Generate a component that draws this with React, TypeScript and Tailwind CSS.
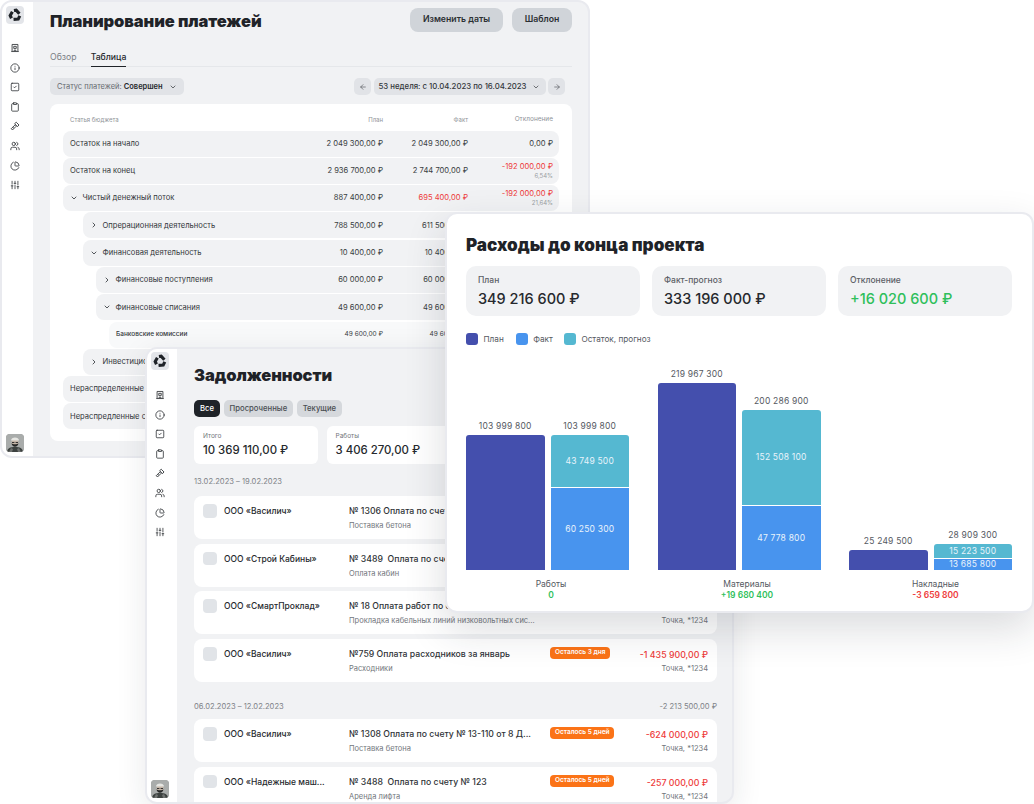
import React from "react";
import { ArrowLeft, ArrowRight, ChevronDown, ChevronRight, Clipboard, Info, PieChart, SquareCheck, SlidersVertical, Users } from "lucide-react";

function Logo() {
  return (
    <div className="flex h-[18px] w-[18px] items-center justify-center rounded-[4px] bg-[#e3e5e9]">
      <svg viewBox="0 0 24 24" className="h-[14px] w-[14px]" fill="none" stroke="#1f2328" strokeWidth="5.4">
        <path d="M10.2 4.2 L14 3.6 L19.5 10" />
        <path d="M20.2 13.5 L17.5 19 L9.5 19.6" />
        <path d="M6 17.5 L3.8 13 L7.5 6.5" />
      </svg>
    </div>
  );
}

function Avatar() {
  return (
    <div className="h-[18px] w-[18px] overflow-hidden rounded-[4px] bg-[#9a9d9c]">
      <svg viewBox="0 0 18 18" className="h-full w-full">
        <rect width="18" height="18" fill="#a9acab" />
        <path d="M1 18c.5-4 3-5 8-5s7.500 1 8 5z" fill="#3d4240" />
        <path d="M3 18l2-4 2 1-1 3zM15 18l-2-4-2 1 1 3z" fill="#6f7270" />
        <circle cx="9" cy="8.500" r="3.400" fill="#c4b4a6" />
        <path d="M5.600 9.300c.2 4.600 6.600 4.600 6.800 0-1 1.300-5.800 1.300-6.800 0z" fill="#262727" />
        <path d="M5 6.600C5 2.600 13 2.600 13 6.600z" fill="#e6e6e2" />
        <rect x="6" y="8" width="2.400" height="1" fill="#333" />
        <rect x="9.600" y="8" width="2.400" height="1" fill="#333" />
      </svg>
    </div>
  );
}

function BuildingIcon() {
  return (
    <svg viewBox="0 0 24 24" className="h-[10px] w-[10px]" fill="none" stroke="#2b2f33" strokeWidth="2">
      <path d="M5 20V3.500h14V20" />
      <path d="M3 20.500h18" />
      <path d="M9 8h6v5H9z" />
      <path d="M10 20v-3h4v3" />
    </svg>
  );
}

function ToolIcon() {
  return (
    <svg viewBox="0 0 24 24" className="h-[10px] w-[10px]" fill="none" stroke="#2b2f33" strokeWidth="2.100" strokeLinejoin="round">
      <path d="M3 18.500 11.500 10l3 3L6 21.500z" />
      <path d="M11 6.500 15 3l6.500 6.500L18 13.500z" />
      <path d="M7 15l2 2" />
    </svg>
  );
}

function Side({ width, top, gap }: { width: string; top: string; gap: string }) {
  const cls = "text-[#2b2f33]";
  return (
    <aside className={`flex shrink-0 flex-col items-start bg-white pb-[4px] pl-[4px] ${width} ${top}`}>
      <Logo />
      <div className={`flex w-[18px] flex-col items-center gap-[9.600px] ${gap}`}>
        <BuildingIcon />
        <Info size={10} strokeWidth={1.9} className={cls} />
        <SquareCheck size={10} strokeWidth={1.9} className={cls} />
        <Clipboard size={10} strokeWidth={1.9} className={cls} />
        <ToolIcon />
        <Users size={10} strokeWidth={1.9} className={cls} />
        <PieChart size={10} strokeWidth={1.9} className={cls} />
        <SlidersVertical size={10} strokeWidth={1.9} className={cls} />
      </div>
      <div className="mt-auto">
        <Avatar />
      </div>
    </aside>
  );
}

type R = { n: string; p: string; f: string; d: string; red?: boolean; pct?: string; indent: string; chev?: "d" | "r"; light?: boolean };
const rows: R[] = [
  { n: "Остаток на начало", p: "2 049 300,00 ₽", f: "2 049 300,00 ₽", d: "0,00 ₽", indent: "ml-0" },
  { n: "Остаток на конец", p: "2 936 700,00 ₽", f: "2 744 700,00 ₽", d: "-192 000,00 ₽", pct: "6,54%", indent: "ml-0" },
  { n: "Чистый денежный поток", p: "887 400,00 ₽", f: "695 400,00 ₽", red: true, d: "-192 000,00 ₽", pct: "21,64%", indent: "ml-0", chev: "d" },
  { n: "Опрерационная деятельность", p: "788 500,00 ₽", f: "611 500,00 ₽", d: "", indent: "ml-[20px]", chev: "r" },
  { n: "Финансовая деятельность", p: "10 400,00 ₽", f: "10 400,00 ₽", d: "", indent: "ml-[20px]", chev: "d" },
  { n: "Финансовые поступления", p: "60 000,00 ₽", f: "60 000,00 ₽", d: "", indent: "ml-[33px]", chev: "r" },
  { n: "Финансовые списания", p: "49 600,00 ₽", f: "49 600,00 ₽", d: "", indent: "ml-[33px]", chev: "d" },
  { n: "Банковские комиссии", p: "49 600,00 ₽", f: "49 600,00 ₽", d: "", indent: "ml-[46px]", light: true },
  { n: "Инвестиционная деятельность", p: "38 500,00 ₽", f: "38 500,00 ₽", d: "", indent: "ml-[20px]", chev: "r" },
  { n: "Нераспределенные доходы", p: "0,00 ₽", f: "0,00 ₽", d: "", indent: "ml-0" },
  { n: "Нераспредленные списания", p: "0,00 ₽", f: "0,00 ₽", d: "", indent: "ml-0" },
];

function Row({ r }: { r: R }) {
  const size = r.light ? "text-[6.500px]" : "text-[7.600px]";
  return (
    <div className={`flex h-[26px] items-center rounded-[8px] pl-[7px] pr-[6px] ${r.indent} ${r.light ? "bg-[#f8f9fa]" : "bg-[#f1f2f4]"}`}>
      {r.chev === "d" && <ChevronDown size={8} strokeWidth={2.400} className="mr-[4.500px] shrink-0 text-[#2b2f33]" />}
      {r.chev === "r" && <ChevronRight size={8} strokeWidth={2.400} className="mr-[4.500px] shrink-0 text-[#2b2f33]" />}
      <span className={`flex-1 whitespace-nowrap text-[#33373b] ${r.light ? "font-medium" : ""} ${size}`}>{r.n}</span>
      <span className={`w-[85px] text-right ${size} text-[#3a3e42]`}>{r.p}</span>
      <span className={`w-[85px] text-right ${size} ${r.red ? "text-[#ee3b3b]" : "text-[#3a3e42]"}`}>{r.f}</span>
      <span className="flex w-[85px] flex-col items-end leading-[9px]">
        <span className={`text-[7.600px] ${r.pct ? "text-[#ee3b3b]" : "text-[#3a3e42]"}`}>{r.d}</span>
        {r.pct && <span className="text-[6px] text-[#9a9ea3]">{r.pct}</span>}
      </span>
    </div>
  );
}

function Planning() {
  return (
    <section className="absolute left-0 top-0 flex h-[458px] w-[590px] overflow-hidden rounded-[12px] border-2 border-[#e9eaef] bg-[#f1f2f4]">
      <Side width="w-[31px]" top="pt-[4px]" gap="mt-[19px]" />
      <div className="flex min-w-0 flex-1 flex-col pl-[17px] pr-[16px]">
        <div className="flex h-[30px] items-center justify-between pt-[6px]">
          <h1 className="pt-[3px] text-[16.500px] font-black tracking-[-0.1px] text-[#1f2328]">Планирование платежей</h1>
          <div className="flex gap-[9px]">
            <button className="h-[24px] w-[93px] rounded-[8px] bg-[#d0d4d9] text-[8.700px] font-semibold text-[#2b2f33]">Изменить даты</button>
            <button className="h-[24px] w-[60px] rounded-[8px] bg-[#d0d4d9] text-[8.700px] font-semibold text-[#2b2f33]">Шаблон</button>
          </div>
        </div>
        <div className="mt-[20px] flex gap-[14px] border-b border-[#e5e7ea] text-[8.700px] leading-[11px]">
          <span className="pb-[3px] text-[#7a7e84]">Обзор</span>
          <span className="-mb-px border-b border-[#1f2328] pb-[3px] font-medium text-[#26292d]">Таблица</span>
        </div>
        <div className="mt-[11px] flex items-center justify-between pr-[7px]">
          <div className="flex h-[17px] items-center rounded-[5px] bg-[#e1e3e7] px-[7px] text-[7.500px] text-[#676b71]">
            Статус платежей:&nbsp;<b className="font-semibold text-[#26292d]">Совершен</b>
            <ChevronDown size={8} className="ml-[6px] text-[#26292d]" />
          </div>
          <div className="flex items-center gap-[2.500px]">
            <span className="flex h-[17px] w-[17px] items-center justify-center rounded-[5px] bg-[#e1e3e7]"><ArrowLeft size={8} className="text-[#54585d]" /></span>
            <span className="flex h-[17px] w-[172px] items-center justify-center gap-[6px] rounded-[5px] bg-[#e1e3e7] text-[7.800px] font-medium text-[#33373b]">
              53 неделя: с 10.04.2023 по 16.04.2023 <ChevronDown size={8} />
            </span>
            <span className="flex h-[17px] w-[17px] items-center justify-center rounded-[5px] bg-[#e1e3e7]"><ArrowRight size={8} className="text-[#54585d]" /></span>
          </div>
        </div>
        <div className="mt-[9px] flex flex-col rounded-[8px] bg-white px-[13px]">
          <div className="flex h-[26.500px] items-center pl-[7px] pr-[6px] pt-[4px] text-[6px] leading-[9px] text-[#8f9398]">
            <span className="flex-1">Статья бюджета</span>
            <span className="w-[85px] text-right">План</span>
            <span className="w-[85px] text-right">Факт</span>
            <span className="w-[85px] text-right text-[6.500px]">Отклонение</span>
          </div>
          <div className="flex flex-col gap-[1.300px] pb-[12px]">
            {rows.map((r) => <Row key={r.n} r={r} />)}
          </div>
        </div>
      </div>
    </section>
  );
}

type D = { c: string; t: string; s: string; b?: string; a?: string };
const g1: D[] = [
  { c: "ООО «Василич»", t: "№ 1306 Оплата по счету № 13-110 от 8 Д...", s: "Поставка бетона", b: "Осталось 3 дня", a: "-1 200 000,00 ₽" },
  { c: "ООО «Строй Кабины»", t: "№ 3489  Оплата по счету № 123", s: "Оплата кабин", b: "Осталось 3 дня", a: "-850 000,00 ₽" },
  { c: "ООО «СмартПроклад»", t: "№ 18 Оплата работ по счету № 45", s: "Прокладка кабельных линий низковольтных сис...", b: "Осталось 3 дня", a: "-310 000,00 ₽" },
  { c: "ООО «Василич»", t: "№759 Оплата расходников за январь", s: "Расходники", b: "Осталось 3 дня", a: "-1 435 900,00 ₽" },
];
const g2: D[] = [
  { c: "ООО «Василич»", t: "№ 1308 Оплата по счету № 13-110 от 8 Д...", s: "Поставка бетона", b: "Осталось 5 дней", a: "-624 000,00 ₽" },
  { c: "ООО «Надежные маш...", t: "№ 3488  Оплата по счету № 123", s: "Аренда лифта", b: "Осталось 5 дней", a: "-257 000,00 ₽" },
];

function DebtRow({ d }: { d: D }) {
  return (
    <div className="flex h-[43px] shrink-0 items-start rounded-[8px] bg-white pl-[9px] pr-[9px] pt-[8px]">
      <span className="h-[13.500px] w-[13.500px] shrink-0 rounded-[4px] bg-[#e1e4e8]" />
      <span className="ml-[7.500px] w-[125px] shrink-0 pt-[2px] text-[8.500px] font-medium leading-[11px] text-[#26292d]">{d.c}</span>
      <div className="w-[201px] shrink-0 pt-[2px]">
        <div className="whitespace-pre text-[8.700px] font-medium leading-[11px] text-[#2f3337]">{d.t}</div>
        <div className="mt-[4px] whitespace-nowrap text-[7.500px] leading-[10px] text-[#72767c]">{d.s}</div>
      </div>
      <span className="flex h-[12px] items-center rounded-[4px] bg-[#fb7317] px-[5px] text-[6.500px] font-semibold text-white">{d.b}</span>
      <div className="ml-auto text-right">
        <div className="pt-[2px] text-[8.800px] font-medium leading-[11px] text-[#ee3b3b]">{d.a}</div>
        <div className="mt-[4px] text-[7.500px] leading-[10px] text-[#72767c]">Точка, *1234</div>
      </div>
    </div>
  );
}

function Stat({ l, v }: { l: string; v: string }) {
  return (
    <div className="h-[38px] w-[124px] shrink-0 rounded-[6px] bg-white px-[9px] pt-[6px]">
      <div className="text-[6.500px] leading-[9px] text-[#72767c]">{l}</div>
      <div className="mt-[1px] text-[11.400px] font-medium leading-[16px] text-[#26292d]">{v}</div>
    </div>
  );
}

function Debts() {
  return (
    <section className="absolute left-[145px] top-[347px] flex h-[457px] w-[589px] overflow-hidden rounded-[12px] border-2 border-[#e9eaef] bg-[#f1f2f4] shadow-[0_8px_30px_rgba(30,35,50,0.10)]">
      <Side width="w-[30px]" top="pt-[3px]" gap="mt-[20px]" />
      <div className="flex min-w-0 flex-1 flex-col pl-[17px] pr-[15px]">
        <h2 className="mt-[14px] text-[16.500px] font-black leading-[24px] tracking-[-0.1px] text-[#1f2328]">Задолженности</h2>
        <div className="mt-[13px] flex gap-[4px] text-[7.700px] font-medium">
          <span className="flex h-[17px] items-center rounded-[5px] bg-[#1f2328] px-[6px] text-white">Все</span>
          <span className="flex h-[17px] items-center rounded-[5px] bg-[#d5d8dc] px-[5.500px] text-[#4a4e53]">Просроченные</span>
          <span className="flex h-[17px] items-center rounded-[5px] bg-[#d5d8dc] px-[6px] text-[#4a4e53]">Текущие</span>
        </div>
        <div className="mt-[9px] flex gap-[8.500px]">
          <Stat l="Итого" v="10 369 110,00 ₽" />
          <Stat l="Работы" v="3 406 270,00 ₽" />
          <Stat l="Материалы" v="4 200 000,00 ₽" />
        </div>
        <div className="mt-[12px] text-[7.600px] leading-[12px] text-[#7f8388]">13.02.2023 – 19.02.2023</div>
        <div className="mt-[8px] flex flex-col gap-[4.700px]">
          {g1.map((d) => <DebtRow key={d.t} d={d} />)}
        </div>
        <div className="mt-[18.500px] flex justify-between text-[7.600px] leading-[12px] text-[#7f8388]">
          <span>06.02.2023 – 12.02.2023</span>
          <span>-2 213 500,00 ₽</span>
        </div>
        <div className="mt-[6.500px] flex flex-col gap-[4.700px]">
          {g2.map((d) => <DebtRow key={d.t} d={d} />)}
        </div>
      </div>
    </section>
  );
}

function Kpi({ l, v, green }: { l: string; v: string; green?: boolean }) {
  return (
    <div className="h-[50px] w-[174px] rounded-[10px] bg-[#f1f2f4] px-[12px] pt-[9px]">
      <div className="text-[8.500px] font-medium leading-[11px] text-[#5c6066]">{l}</div>
      <div className={`mt-[3px] text-[14.500px] font-medium leading-[19px] ${green ? "text-[#2fbf5b]" : "text-[#26292d]"}`}>{v}</div>
    </div>
  );
}

function Bar({ label, children, h }: { label: string; children: React.ReactNode; h: string }) {
  return (
    <div className="flex w-[78.500px] flex-col items-center">
      <span className="mb-[3px] text-[8.500px] leading-[11px] tracking-[0.2px] text-[#55595f]">{label}</span>
      <div className={`flex w-full flex-col gap-px overflow-hidden rounded-t-[3px] ${h}`}>{children}</div>
    </div>
  );
}

function Seg({ t, c, h }: { t?: string; c: string; h: string }) {
  return <div className={`flex w-full items-center justify-center text-[8.500px] tracking-[0.2px] text-[#e8f3fb] ${c} ${h}`}>{t}</div>;
}

function Group({ name, delta, color, shift, children }: { name: string; delta: string; color: string; shift: string; children: React.ReactNode }) {
  return (
    <div className="flex w-[163px] flex-col">
      <div className="flex h-[208px] items-end justify-between">{children}</div>
      <div className={`mt-[8px] text-center ${shift}`}>
        <div className="text-[8.500px] leading-[12px] text-[#55595f]">{name}</div>
        <div className={`text-[8.500px] font-semibold leading-[11px] ${color}`}>{delta}</div>
      </div>
    </div>
  );
}

function Expenses() {
  return (
    <section className="absolute left-[445px] top-[212px] h-[401px] w-[589px] rounded-[12px] border-2 border-[#e9eaef] bg-white pl-[19px] pr-[20px] shadow-[0_16px_40px_rgba(30,35,50,0.16)]">
      <h2 className="mt-[19px] text-[17.100px] font-black leading-[24px] text-[#1f2328]">Расходы до конца проекта</h2>
      <div className="mt-[9px] flex gap-[12px]">
        <Kpi l="План" v="349 216 600 ₽" />
        <Kpi l="Факт-прогноз" v="333 196 000 ₽" />
        <Kpi l="Отклонение" v="+16 020 600 ₽" green />
      </div>
      <div className="mt-[17px] flex items-center text-[8.200px] leading-[12px] text-[#55595f]">
        <span className="h-[12px] w-[12px] rounded-[3px] bg-[#444fad]" /><span className="ml-[5.500px]">План</span>
        <span className="ml-[12px] h-[12px] w-[12px] rounded-[3px] bg-[#4894ee]" /><span className="ml-[5.500px]">Факт</span>
        <span className="ml-[11px] h-[12px] w-[12px] rounded-[3px] bg-[#55b8d1]" /><span className="ml-[5.500px]">Остаток, прогноз</span>
      </div>
      <div className="mt-[17px] flex justify-between">
        <Group name="Работы" delta="0" color="text-[#2fbf5b]" shift="pl-[7px]">
          <Bar label="103 999 800" h="h-[135px]"><Seg c="bg-[#444fad]" h="h-[135px]" /></Bar>
          <Bar label="103 999 800" h="h-[135px]">
            <Seg t="43 749 500" c="bg-[#55b8d1]" h="h-[52px]" />
            <Seg t="60 250 300" c="bg-[#4894ee]" h="h-[82px]" />
          </Bar>
        </Group>
        <Group name="Материалы" delta="+19 680 400" color="text-[#2fbf5b]" shift="pl-[16px]">
          <Bar label="219 967 300" h="h-[187px]"><Seg c="bg-[#444fad]" h="h-[187px]" /></Bar>
          <Bar label="200 286 900" h="h-[160px]">
            <Seg t="152 508 100" c="bg-[#55b8d1]" h="h-[95px]" />
            <Seg t="47 778 800" c="bg-[#4894ee]" h="h-[64px]" />
          </Bar>
        </Group>
        <Group name="Накладные" delta="-3 659 800" color="text-[#ee3b3b]" shift="pl-[10px]">
          <Bar label="25 249 500" h="h-[20px]"><Seg c="bg-[#444fad]" h="h-[20px]" /></Bar>
          <Bar label="28 909 300" h="h-[26px]">
            <Seg t="15 223 500" c="bg-[#55b8d1]" h="h-[14px]" />
            <Seg t="13 685 800" c="bg-[#4894ee]" h="h-[11px]" />
          </Bar>
        </Group>
      </div>
    </section>
  );
}

export default function App() {
  return (
    <div className="relative h-[804px] w-[1034px] overflow-hidden bg-white font-['Inter',sans-serif]">
      <Planning />
      <Debts />
      <Expenses />
    </div>
  );
}
